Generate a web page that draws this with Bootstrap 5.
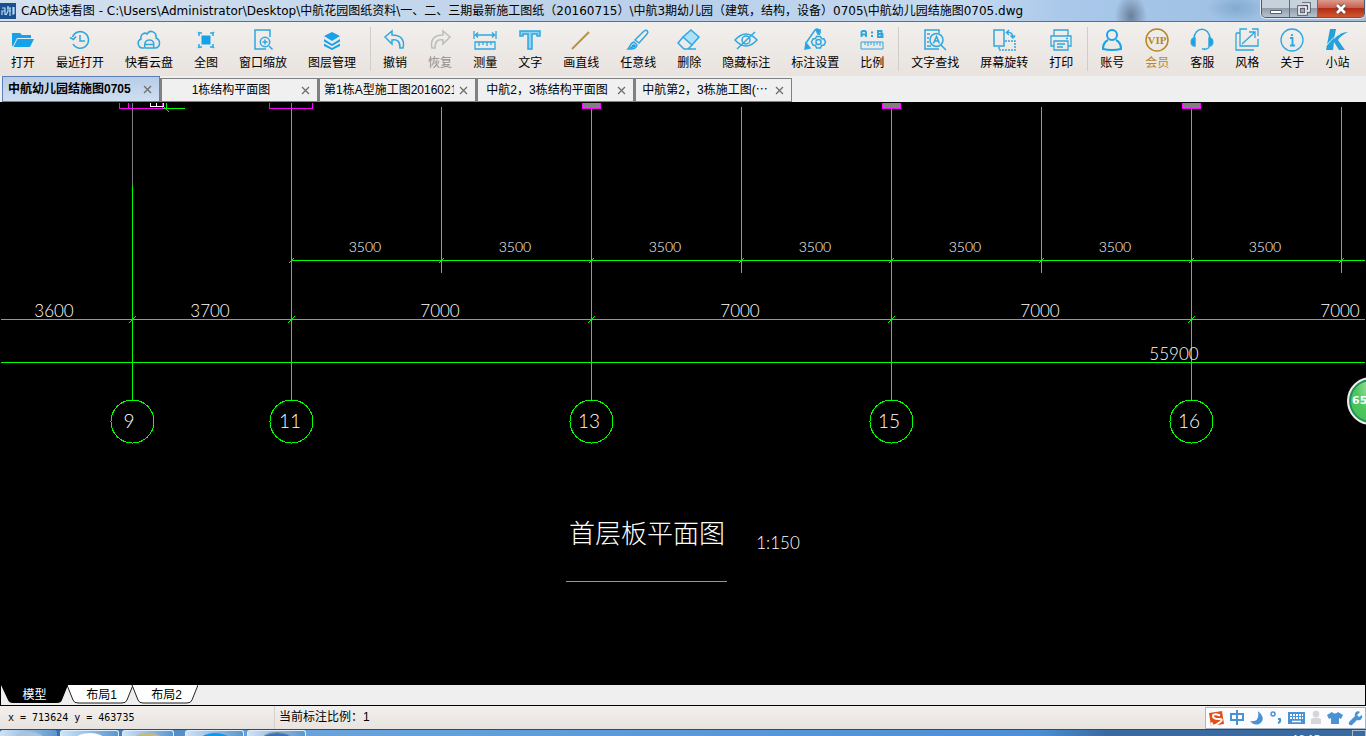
<!DOCTYPE html>
<html lang="zh-CN">
<head>
<meta charset="utf-8">
<meta name="viewport" content="width=device-width, initial-scale=1">
<title>CAD快速看图</title>
<link href="https://cdn.jsdelivr.net/npm/bootstrap@5.3.0/dist/css/bootstrap.min.css" rel="stylesheet">
<script src="https://cdn.jsdelivr.net/npm/bootstrap@5.3.0/dist/js/bootstrap.bundle.min.js"></script>
<style>
body{font:12px/16px "Liberation Sans","Noto Sans CJK SC",sans-serif;color:#000;background:#efefef}
button{border:0;background:none;padding:0;color:inherit;font:inherit}
svg{display:block;flex:none}
.titlebar{height:22px;border-bottom:1px solid #5c6f87;font-family:"DejaVu Sans","Noto Sans CJK SC",sans-serif;
 background:radial-gradient(ellipse 16px 22px at 1131px 16px,#5a6d85cc,transparent),radial-gradient(ellipse 30px 14px at 1236px 8px,#6f9cc299,transparent),linear-gradient(90deg,#d3e0ef 0,#c6d8ec 25%,#b9cfea 50%,#c6dbf0 70%,#a9c8ea 78%,#9fc0e4 92%,#a6bcd4)}
.app-logo{width:16px;height:16px;margin:3px 5px 0 0;background:#1c4f8e}
.wincontrols{height:18px;border:1px solid #4b5a6d;border-top:0;border-radius:0 0 5px 5px;overflow:hidden;margin-right:1px;box-shadow:0 0 0 1px #dfeaf6}
.wincontrols button{width:28px;height:17px;display:flex;justify-content:center;align-items:center;border-right:1px solid #5f6d7d;background:linear-gradient(#c7d1dc 45%,#929daa 50%,#b4c2d0)}
.wincontrols button:last-child{width:46px;border:0;background:linear-gradient(#dc9a8c 0,#c96050 45%,#b22c16 50%,#d2572f)}
.tools{height:54px;padding-left:1px;background:linear-gradient(#f1efec,#e9e3df)}
.tool{display:flex;flex-direction:column;align-items:center;padding:6px 11px 0 10px;white-space:nowrap}
.tool svg{width:24px;height:24px;margin-bottom:3px;fill:none;stroke:#2ea7e0;stroke-width:1.5}
.tool.off{color:#8f8f8f}.tool.off svg{stroke:#bcbcbc}
.tool.vip{color:#b8862b}.tool.vip svg{stroke:#b8862b}
.sep{width:1px;height:44px;margin:5px 2px 0 3px;background:#cfccc9}
.doctabs{height:26px;padding-left:2px;align-items:flex-end}
.doctab{width:158px;height:24px;border:1px solid #808080;border-left-width:2px;background:#f0f0f0;display:flex;align-items:center;padding-left:4px}
.doctab.first{height:26px;border:1px solid #5b7fb8;padding-left:5px;background:linear-gradient(#b8cce6,#cfdff0);font-weight:700}
.doctab a{flex:1;overflow:hidden;white-space:nowrap;color:#000;text-decoration:none;text-align:center;width:0}
.doctab a.cut{text-align:left}
.doctab button{width:21px;padding-left:5px}
.doctab button svg{stroke:#6e6e6e;stroke-width:1.3}
.sheet{background:#000;min-height:0}
.sheet text{fill:#fff;font-family:Lato,"Liberation Sans",sans-serif;font-weight:300;text-anchor:middle}
.sheet .dim text{font-size:17px}
.sheet .half text{font-size:14px}
.sheet .axis text{font-size:19px}
.sheet text.caption-cn{font-family:"Noto Sans CJK SC",sans-serif;font-size:26px}
.ball{position:absolute;right:-29px;top:275px;width:48px;height:48px;border-radius:50%;border:2px solid #eee;background:radial-gradient(ellipse at 50% 15%,#a5e4a8,#4cc55c 50%,#43bd58);box-shadow:inset 0 0 0 2px #23905c;color:#fff;font:700 11px/44px "DejaVu Sans",sans-serif;padding-left:3px}
.layouts{height:21px;border:solid #000;border-width:0 1px 1px}
.layouts button{position:relative;width:67px;height:19px;margin-right:-2px;padding-left:4px}
.layouts button.on{color:#fff;padding:0;z-index:1}
.layouts svg{position:absolute;inset:0;width:100%;height:100%}
.layouts span{position:relative}
.status{height:23px;background:linear-gradient(#f1efec,#e8e3df)}
.coords{width:275px;padding-left:8px;font:10px/23px "DejaVu Sans Mono",monospace;border-right:1px solid #d2cfcc}
.scale-note{padding-left:4px;line-height:23px}
.ime{width:161px;height:22px;border:1px solid #a8b6c5;background:#fafcff;padding:0 2px;color:#4a92d2}
.taskbar{height:7px;border-top:1px solid #274d77;overflow:hidden;background:linear-gradient(90deg,#3a6fa8 0,#3a6fa8 4%,#6aa4dc 20%,#4b8fd8 76%,#3a6a9f 81%,#3a6a9f)}
.task{width:59px;height:8px;margin-right:3px;border:1px solid #dcedff;border-bottom:0;border-radius:3px 3px 0 0;background:linear-gradient(90deg,#cfe3f4,#5c96cc);display:flex;justify-content:center}
.task i{width:28px;height:12px;margin-top:2px;border-radius:50% 50% 0 0;background:#fff}
.clock{color:#fff;font-size:11px;line-height:12px;padding-top:3px}
</style>
</head>
<body class="vh-100 d-flex flex-column overflow-hidden">
<header class="titlebar d-flex flex-shrink-0">
 <svg class="app-logo" viewBox="0 0 16 16" fill="none" stroke="#b5daf7" stroke-width="1.2"><path d="M2 5h3v7M5 8H2v4M8 3v5L6 12M7 5h4M9 8h2M10 5v8M13 4v8M14 4v7"/></svg>
 <div class="flex-grow-1 text-nowrap overflow-hidden pt-1 lh-sm" style="width:0">CAD快速看图 - C:\Users\Administrator\Desktop\中航花园图纸资料\一、二、三期最新施工图纸（20160715）\中航3期幼儿园（建筑，结构，设备）0705\中航幼儿园结施图0705.dwg</div>
 <div class="wincontrols d-flex">
  <button aria-label="最小化"><svg width="14" height="14"><path d="M1.500 8.500h11v3h-11z" fill="#fff" stroke="#56606e"/></svg></button>
  <button aria-label="还原"><svg width="14" height="14" fill="none"><path d="M5 2h7v7H10M2 5h7v7H2z" stroke="#4d5664" stroke-width="3.500"/><path d="M5 2h7v7H10M2 5h7v7H2z" stroke="#fff" stroke-width="1.600"/></svg></button>
  <button aria-label="关闭"><svg width="14" height="14"><path d="M3 3l8 8M11 3l-8 8" stroke="#5b3c3c" stroke-width="4.500"/><path d="M3 3l8 8M11 3l-8 8" stroke="#fff" stroke-width="2.800"/></svg></button>
 </div>
</header>

<nav class="tools d-flex flex-shrink-0" aria-label="工具栏">
 <button class="tool"><svg viewBox="0 0 24 24"><path d="M1 18V5h8l2 2h9v3H6L2 18zM6.500 11H23l-4 8H2.500z" fill="#16a2ea" stroke="none"/></svg>打开</button>
 <button class="tool"><svg viewBox="0 0 24 24"><path d="M4.500 9A8.300 8.300 0 1 1 5 16M2 9.500l3.500 2L8 8.500M12 7v6h5"/></svg>最近打开</button>
 <button class="tool"><svg viewBox="0 0 24 24"><path d="M7 20H5.500A4.700 4.700 0 0 1 4 11C3 6 8 4 10 6c3-5 10-2 9 4 5 2 4.500 9-.5 10H17M8 20c-1-6 1-8 4.500-8s5 2 4 8zM8 16.500h8.500"/></svg>快看云盘</button>
 <button class="tool"><svg viewBox="0 0 24 24"><path d="M7.500 7.500h9v9h-9z" fill="#16a2ea" stroke="none"/><path d="M5 8V5h3M16 5h3v3M19 16v3h-3M8 19H5v-3M4 4l2 2M20 4l-2 2M20 20l-2-2M4 20l2-2"/></svg>全图</button>
 <button class="tool"><svg viewBox="0 0 24 24"><path d="M19 9V2H4v19h11"/><circle cx="14" cy="14" r="4.700"/><path d="M18 18l3.500 3.500M11.500 14h5M14 11.500v5"/></svg>窗口缩放</button>
 <button class="tool"><svg viewBox="0 0 24 24" ><g fill="#16a2ea" stroke="none"><path d="M12 4l8 4-8 5-8-5z"/><path d="M4 11l8 5 8-5v2.500L12 18l-8-4.500zM4 15.500l8 4.500 8-4.500V18l-8 4-8-4z"/></g></svg>图层管理</button>
 <div class="sep"></div>
 <button class="tool"><svg viewBox="0 0 24 24"><path d="M9 3L2 9l7 7v-4c6-1 8 2 8 8h3c2-8-2-13-11-13z"/></svg>撤销</button>
 <button class="tool off" disabled><svg viewBox="0 0 24 24"><path d="M15 3l7 6-7 7v-4c-6-1-8 2-8 8H4C2 12 6 7 15 7z"/></svg>恢复</button>
 <button class="tool"><svg viewBox="0 0 24 24" style="stroke-width:1.300"><path d="M1 3v8M23 3v8M2 7h20M5 4.500L2.500 7 5 9.500M19 4.500L21.500 7 19 9.500M2 14h20v7H2zM6 14v4M10 14v3M14 14v4M18 14v3"/></svg>测量</button>
 <button class="tool"><svg viewBox="0 0 24 24"><path d="M2 3h20v5h-3V6h-5v15h-4V6H5v2H2z" fill="#8fd2f2"/></svg>文字</button>
 <button class="tool"><svg viewBox="0 0 24 24"><path d="M3 21L20 4" stroke="#b9923f" stroke-width="2"/></svg>画直线</button>
 <button class="tool"><svg viewBox="0 0 24 24"><path d="M9 12l9-9c3-2 5 1 3 3l-8 9zM8 14l3 3c-1 4-4 4-9 4 2-2 2-6 6-7z"/><path d="M3 20c3-1 3-4 5-4l2 2c-2 2-4 2-7 2z" fill="#16a2ea" stroke="none"/></svg>任意线</button>
 <button class="tool"><svg viewBox="0 0 24 24"><path d="M14 2l8 7-7 8-9-8z" fill="#aee0f7"/><path d="M6 9l-5 6 6 6h4l4-4M7 21h12"/></svg>删除</button>
 <button class="tool"><svg viewBox="0 0 24 24"><path d="M1 12q11-12 22 0-11 12-22 0zM21 4L3 21"/><circle cx="12" cy="12" r="4"/></svg>隐藏标注</button>
 <button class="tool"><svg viewBox="0 0 24 24"><path d="M3 15L12 2c2-2 6 0 5 3l-1 2"/><path d="M2 21l1-6 4 5zM13 2h4l-2 4z" fill="#16a2ea"/><path d="M13.500 8.500h4l1 2 2.500.5 1.500 3-1.500 3-2.500.5-1 2.500h-4l-1-2.500-2.500-.5-1.500-3 1.500-3 2.500-.5z"/><circle cx="15.500" cy="14" r="2.500"/></svg>标注设置</button>
 <button class="tool"><svg viewBox="0 0 24 24"><path d="M1.500 9V4l1-1H5l1 1v5M1.500 6.500H6M11 4.500h2M11 8h2M18 3h3.500v6H18zM18 6h4.500v3H18" stroke-width="1.900"/><path d="M1 14h22v7H1zM5 14v3M8 14v4M11 14v3M14 14v4M17 14v3M20 14v4" style="stroke-width:1"/></svg>比例</button>
 <div class="sep"></div>
 <button class="tool"><svg viewBox="0 0 24 24"><path d="M16 5V2H2v19h14M4 6h3M4 10h2M4 14h2M4 18h4"/><circle cx="13.500" cy="12" r="6.500"/><path d="M18 17l5 5M10.500 15.500l3-7 3 7M11.500 13h4"/></svg>文字查找</button>
 <button class="tool"><svg viewBox="0 0 24 24"><path d="M2 2h10v16H2z"/><path d="M13 13h10v9H7v-4" stroke-dasharray="2 1"/><path d="M15 4q6 0 6 6M17 2l-2.500 2.500L17 7M18.500 7.500l2.500 2.500 2-2.500"/></svg>屏幕旋转</button>
 <button class="tool"><svg viewBox="0 0 24 24"><path d="M5 8V2h14v6M5 18H2V8h20v10h-3M5 13h14v9H5zM8 16h8M8 19h6M17 10.500h2" style="stroke-width:1.300"/></svg>打印</button>
 <div class="sep"></div>
 <button class="tool"><svg viewBox="0 0 24 24"><g stroke="#16a2ea" stroke-width="2"><circle cx="12" cy="7" r="5"/><path d="M8 12c-4 2-5 5-5 9q9 2 18 0c0-4-1-7-5-9"/></g></svg>账号</button>
 <button class="tool vip"><svg viewBox="0 0 24 24"><circle cx="12" cy="12" r="11"/><text x="12" y="16" text-anchor="middle" font-family="Liberation Serif" font-weight="700" font-size="11" fill="#b8862b" stroke="none">VIP</text></svg>会员</button>
 <button class="tool"><svg viewBox="0 0 24 24"><path d="M4 11C4-2 20-2 20 11M20 16c0 4-2 5-6 5.500"/><path d="M5 10v8c-5 0-5-8 0-8zM19 10v8c5 0 5-8 0-8zM12 21h3" fill="#16a2ea"/></svg>客服</button>
 <button class="tool"><svg viewBox="0 0 24 24"><path d="M12 1H5v17h18V11M17 1h6v7M1 5v17h18M1 5h4M7 16L20 4M14 4h6v6" style="stroke-width:1.300"/></svg>风格</button>
 <button class="tool"><svg viewBox="0 0 24 24"><circle cx="12" cy="12" r="11" style="stroke-width:1.300"/><path d="M10 10h2.500v7M10 17.500h5M12 6v2" stroke-width="1.800"/></svg>关于</button>
 <button class="tool"><svg viewBox="0 0 24 24"><path d="M5 1h6L9 11Q15 4 23 4q-8 4-10 8l7 10h-6L9 14 8 22H1z" fill="#24a0dc" stroke="none"/><path d="M2 17Q9 8 15 6" stroke="#d7effb" stroke-width="1"/></svg>小站</button>
</nav>

<nav class="doctabs d-flex flex-shrink-0" aria-label="图纸">
 <div class="doctab first"><a href="#" class="cut">中航幼儿园结施图0705</a><button aria-label="关闭"><svg width="9" height="9"><path d="M1 1l7 7M8 1L1 8"/></svg></button></div>
 <div class="doctab"><a href="#">1栋结构平面图</a><button aria-label="关闭"><svg width="9" height="9"><path d="M1 1l7 7M8 1L1 8"/></svg></button></div>
 <div class="doctab"><a href="#" class="cut">第1栋A型施工图20160216</a><button aria-label="关闭"><svg width="9" height="9"><path d="M1 1l7 7M8 1L1 8"/></svg></button></div>
 <div class="doctab"><a href="#">中航2，3栋结构平面图</a><button aria-label="关闭"><svg width="9" height="9"><path d="M1 1l7 7M8 1L1 8"/></svg></button></div>
 <div class="doctab"><a href="#">中航第2，3栋施工图(⋯</a><button aria-label="关闭"><svg width="9" height="9"><path d="M1 1l7 7M8 1L1 8"/></svg></button></div>
</nav>

<main class="sheet flex-grow-1 position-relative overflow-hidden">
 <svg class="w-100 h-100" viewBox="0 102 1366 583" preserveAspectRatio="xMidYMid slice" fill="none" stroke-width="1">
  <g shape-rendering="crispEdges">
   <path stroke="#808080" d="M132.500 103V186M291.500 103V108M591.500 108V112M891.500 108V112M1191.500 108V112"/>
   <path stroke="#0f0" d="M132.500 186V400M291.500 108V400M591.500 111V400M891.500 111V400M1191.500 111V400M441.500 107V273M741.500 107V273M1041.500 107V273M1341.500 107V273M291 260.500H1365M1 319.500H1365M1 362.500H1365M566 581.500H727M163 108.500H185M166.500 103V109M163 106l6 6"/>
   <path stroke="#0f0" d="M289 263l5-5M439 263l5-5M589 263l5-5M739 263l5-5M889 263l5-5M1039 263l5-5M1189 263l5-5M1339 263l5-5M129 323l7-7M288 323l7-7M588 323l7-7M888 323l7-7M1188 323l7-7"/>
   <g stroke="#0f0"><circle cx="132.500" cy="421.500" r="21.500"/><circle cx="291.500" cy="421.500" r="21.500"/><circle cx="591.500" cy="421.500" r="21.500"/><circle cx="891.500" cy="421.500" r="21.500"/><circle cx="1191.500" cy="421.500" r="21.500"/></g>
   <path stroke="#f0f" d="M119.500 103v5.500h43V103M128.500 103v5M269.500 103v5.500h43V103"/>
   <path stroke="#fff" d="M150.500 103v3.500h12.500V103M156.500 103v3"/>
   <path stroke="#f0f" fill="#808080" d="M582.500 102.500v6h18v-6M882.500 102.500v6h18v-6M1182.500 102.500v6h18v-6"/>
  </g>
  <g class="half"><text x="365" y="252">3500</text><text x="515" y="252">3500</text><text x="665" y="252">3500</text><text x="815" y="252">3500</text><text x="965" y="252">3500</text><text x="1115" y="252">3500</text><text x="1265" y="252">3500</text></g>
  <g class="dim"><text x="54" y="317">3600</text><text x="210" y="317">3700</text><text x="440" y="317">7000</text><text x="740" y="317">7000</text><text x="1040" y="317">7000</text><text x="1340" y="317">7000</text><text x="1174" y="360">55900</text><text x="778" y="549">1:150</text></g>
  <g class="axis"><text x="129" y="428">9</text><text x="290" y="428">11</text><text x="589" y="428">13</text><text x="889" y="428">15</text><text x="1189" y="428">16</text></g>
  <text class="caption-cn" x="647" y="543">首层板平面图</text>
 </svg>
 <div class="ball">65</div>
</main>

<nav class="layouts d-flex flex-shrink-0" aria-label="布局">
 <button class="on"><svg viewBox="0 0 67 19"><path d="M0 0h67l-6 15q-1 3-5 3H12q-4 0-5-3z" fill="#000"/></svg><span>模型</span></button>
 <button><svg viewBox="0 0 67 19"><path d="M1 0l6 15q1 3 5 3h44q4 0 5-3L67 0" fill="#fff" stroke="#222"/></svg><span>布局1</span></button>
 <button><svg viewBox="0 0 67 19"><path d="M1 0l6 15q1 3 5 3h44q4 0 5-3L67 0" fill="#fff" stroke="#222"/></svg><span>布局2</span></button>
</nav>

<footer class="status d-flex flex-shrink-0">
 <div class="coords">x = 713624 y = 463735</div>
 <div class="scale-note flex-grow-1">当前标注比例：1</div>
 <div class="ime d-flex align-items-center justify-content-between mt-auto">
  <svg width="17" height="17" viewBox="0 0 17 17"><path d="M1 3l13-2 2 13-13 2z" fill="#e4501b"/><path d="M12 5.500Q5 3 5 6t6 3-1 4.500-6-1" fill="none" stroke="#fff" stroke-width="2"/></svg>
  <svg width="16" height="16" fill="none" stroke="#4a92d2" stroke-width="2"><path d="M2 4h12v6H2zM8 0v15"/></svg>
  <svg width="16" height="16"><path d="M9 1q9 8 1 13-5 2-9-3 10 2 8-10z" fill="#4a92d2"/></svg>
  <svg width="14" height="16" fill="none" stroke="#4a92d2" stroke-width="1.500"><circle cx="4" cy="4" r="2"/><path d="M9 9h2q1 3-2 4" stroke-width="2"/></svg>
  <svg width="17" height="14" viewBox="0 0 17 14"><path d="M0 1h17v12H0z" fill="#4a92d2"/><path d="M2 4h13M2 7h13" stroke="#fff" stroke-width="1.800" stroke-dasharray="2 1"/><path d="M4 10.500h9" stroke="#fff" stroke-width="1.500"/></svg>
  <svg width="14" height="16" fill="#d6d6d6"><circle cx="7" cy="4" r="3.300"/><path d="M2 14V9q5-3 10 0v5z"/></svg>
  <svg width="17" height="16"><path d="M5 2q3 3 6 0l5 3-2 4-2-1v6H4V8L2 9 0 5z" fill="#4a92d2"/></svg>
  <svg width="15" height="16"><path d="M1 12l6-6c-1-4 3-6 5-4L9 5l2 2 3-2c1 4-2 6-5 5l-5 5c-2 1-4-1-3-3z" fill="#4a92d2"/></svg>
 </div>
</footer>
<div class="taskbar d-flex flex-shrink-0">
 <div class="task bg-transparent border-0" style="width:57px"><i style="background:#a9c5dd"></i></div>
 <div class="task"><i></i></div><div class="task" style="width:52px"><i style="background:#c9b77c"></i></div>
 <div class="task ms-2"><i style="background:#1296f2"></i></div><div class="task"><i style="background:#2e74c4;outline:1px solid #888"></i></div>
 <div class="clock ms-auto me-4 pe-2">16:15</div>
 <div style="width:14px;height:8px;border:1px solid #a7bcd0"></div>
</div>
</body>
</html>
